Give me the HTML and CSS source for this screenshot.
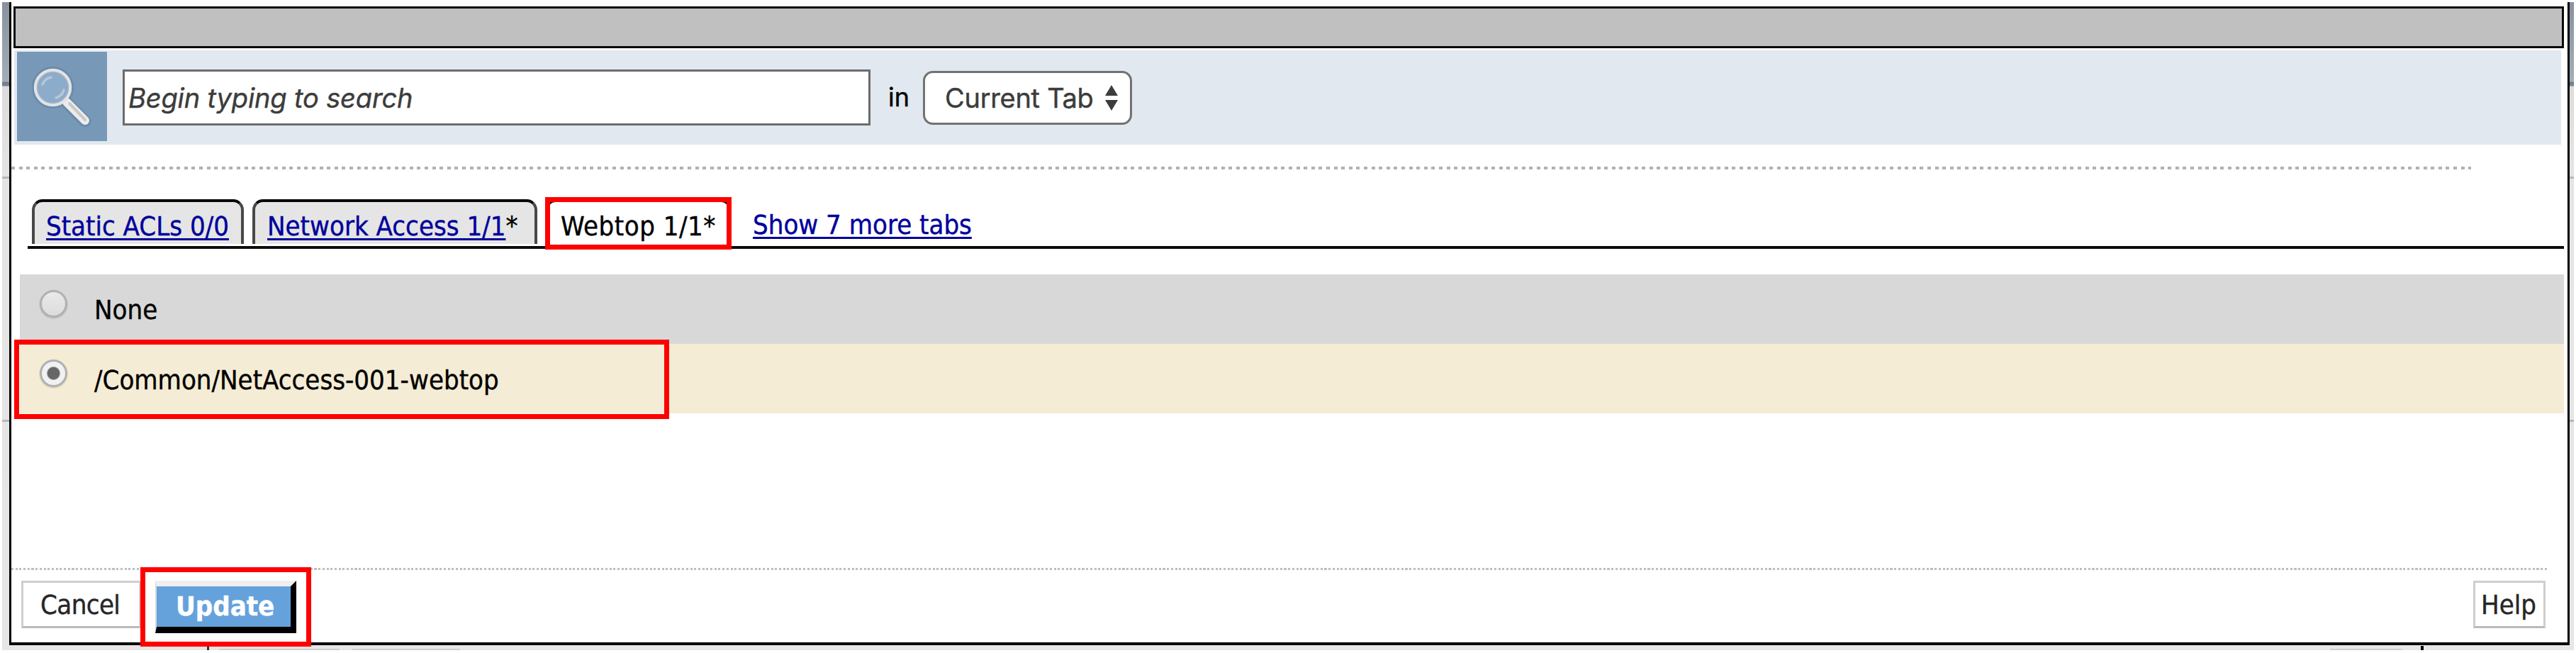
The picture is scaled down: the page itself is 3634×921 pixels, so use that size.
FILE: index.html
```html
<!DOCTYPE html>
<html lang="en">
<head>
<meta charset="utf-8">
<title>Webtop assignment</title>
<link rel="stylesheet" href="styles.css">
</head>
<body>
<div class="backdrop">
  <main class="dialog">
    <div class="title-bar"></div>
    <section class="search">
      <div class="search-icon">
        <svg viewBox="0 0 127 127" width="127" height="127" fill="none" stroke-linecap="round">
          <path d="M70 72 L96 98" stroke="#5f7f9f" stroke-width="17" opacity=".55"/>
          <circle cx="50.500" cy="50.500" r="25" stroke="#5f7f9f" stroke-width="9" opacity=".55"/>
          <path d="M70 71 L96 97" stroke="#ececec" stroke-width="12"/>
          <path d="M74 73 L96 96" stroke="#c9c9c9" stroke-width="4"/>
          <circle cx="50.500" cy="50.500" r="24.500" fill="#8dabcb" stroke="#e0e4e8" stroke-width="4.500"/>
          <circle cx="50.500" cy="50.500" r="22" stroke="#a9b5c2" stroke-width="1.500"/>
          <path d="M36 46 Q39 38 48 36" stroke="#b4c8dc" stroke-width="3.500"/>
          <path d="M55 65 Q64 62 66 54" stroke="#b4c8dc" stroke-width="3.500"/>
        </svg>
      </div>
      <div class="search-input">Begin typing to search</div>
      <span class="search-in">in</span>
      <div class="select"><span>Current Tab</span>
        <svg width="18" height="36" viewBox="0 0 18 36"><path d="M9 0 L18 15 H0 Z M0 21 H18 L9 36 Z" fill="#3c3c3c"/></svg>
      </div>
    </section>
    <div class="dots dots-top"></div>
    <nav class="tabs">
      <div class="tab tab-acl"><a>Static ACLs 0/0</a></div>
      <div class="tab tab-network"><a>Network Access 1/1</a>*</div>
      <div class="tab tab-webtop">Webtop 1/1*<i class="mark mark-tab"></i></div>
      <a class="more">Show 7 more tabs</a>
    </nav>
    <section class="options">
      <div class="option"><i class="radio"></i><span>None</span></div>
      <div class="option selected"><i class="radio"></i><span>/Common/NetAccess-001-webtop</span><i class="mark mark-option"></i></div>
    </section>
    <div class="dots dots-bottom"></div>
    <footer class="actions">
      <div class="button cancel">Cancel</div>
      <div class="update">Update<i class="mark mark-update"></i></div>
      <div class="button help">Help</div>
    </footer>
  </main>
  <div class="behind"><i class="b1"></i><i class="b2"></i><i class="b3"></i><i class="b4"></i><i class="b5"></i></div>
</div>
</body>
</html>
```
FILE: styles.css
```css
* { box-sizing: border-box; }
body {
  margin: 0;
  padding: 3px 3px 4px;
  height: 921px;
  overflow: hidden;
  background: #fff;
  color: #000;
  font: 38px/44px "DejaVu Sans Condensed", "DejaVu Sans", sans-serif;
  -webkit-text-stroke: .4px currentColor;
}
.backdrop {
  height: 914px;
  background:
    linear-gradient(#b8b8b8, #b8b8b8) 0 246px / 100% 3px no-repeat,
    linear-gradient(#b8b8b8, #b8b8b8) 0 589px / 100% 3px no-repeat,
    linear-gradient(#87929d 0, #a3adb9 112px, #6f7b87 113px, #7b8691 118px, #dcdcdc 119px, #e4e4e4 246px, #e6e6e6 100%);
}
.dialog {
  display: flex;
  flex-direction: column;
  height: 907px;
  margin: 0 6px 0 10px;
  border: solid #000;
  border-width: 0 3px 4px;
  background: #fff;
}
.title-bar {
  height: 59px;
  margin: 6px 5px 0 3px;
  border: 3px solid #0a0a0a;
  background: #c0c0c0;
}
.search {
  display: flex;
  height: 133px;
  margin: 3px 9px 0 4px;
  background: #e1e8ef;
  font-family: Inter, sans-serif;
}
.search-icon {
  width: 127px;
  height: 126px;
  margin: 2px 0 0 4px;
  background: #7898b8;
}
.search-icon svg { display: block; }
.search-input {
  width: 1055px;
  height: 79px;
  margin: 27px 0 0 22px;
  padding-left: 5px;
  border: 3px solid #6c6c6c;
  background: #fff;
  color: #3c3c3c;
  font-style: italic;
  line-height: 74px;
  letter-spacing: -.15px;
}
.search-in {
  margin: 27px 0 0 25px;
  width: 49px;
  line-height: 78px;
  font-size: 36px;
  white-space: nowrap;
}
.select {
  display: flex;
  align-items: center;
  gap: 14px;
  width: 295px;
  height: 76px;
  margin-top: 29px;
  padding-left: 28px;
  border: 3px solid #727272;
  border-radius: 14px;
  background: #fff;
  color: #3c3c3c;
}
.select span { width: 212px; letter-spacing: -.3px; white-space: nowrap; }
.dots { flex: none; }
.dots-top {
  width: 3470px;
  height: 4px;
  margin-top: 31px;
  background: repeating-linear-gradient(90deg, #b2b2b2 0 5px, #fff 5px 10.6px);
}
.tabs {
  display: flex;
  height: 70px;
  margin: 42px 5px 0 23px;
  padding-left: 6px;
  border-bottom: 4px solid #0c0c0c;
  white-space: nowrap;
}
.tab {
  position: relative;
  height: 63px;
  border: 4px solid #484848;
  border-top-color: #080808;
  border-bottom: 0;
  border-radius: 15px 15px 0 0;
  background: #e5e5e5;
  line-height: 69px;
}
.tab a, .more {
  color: #00009c;
  text-decoration: underline;
  text-decoration-thickness: 3px;
  text-underline-offset: 4px;
}
.tab-acl { width: 299px; padding-left: 16px; }
.tab-network { width: 402px; margin-left: 12px; padding-left: 17px; }
.tab-webtop { width: 263px; height: 66px; margin-left: 11px; padding-left: 18px; background: #fff; letter-spacing: .5px; }
.more { margin-left: 30px; line-height: 72px; }
.options { margin: 36px 5px 0 12px; }
.option {
  position: relative;
  display: flex;
  height: 98px;
  padding-left: 28px;
  background: #d8d8d8;
  line-height: 101px;
}
.option.selected { background: #f5ecd5; line-height: 102px; }
.radio {
  width: 39px;
  height: 39px;
  margin: 22px 38px 0 0;
  border: 3px solid #b0b0b0;
  border-radius: 50%;
  background: linear-gradient(#e9e9e9, #dcdcdc);
  box-shadow: 0 1px 2px rgba(0, 0, 0, .2);
}
.selected .radio { background: radial-gradient(circle, #666 0 8px, #f1f1f1 10px); }
.dots-bottom {
  width: 3580px;
  height: 3px;
  margin-top: 218px;
  background: repeating-linear-gradient(90deg, #bebebe 0 3px, #fff 3px 5.7px);
}
.actions { display: flex; margin: 15px 30px 0 14px; }
.button {
  height: 67px;
  border: 3px solid #cfcfcf;
  border-bottom-color: #bbb;
  color: #262626;
  line-height: 62px;
}
.cancel { width: 169px; padding-left: 24px; letter-spacing: -.6px; }
.update {
  position: relative;
  width: 199px;
  height: 74px;
  margin-left: 20px;
  padding-left: 27px;
  border: solid #000;
  border-width: 8px 8px 9px 2px;
  border-top-color: #efefef;
  border-left-color: #d8d8d8;
  background: #65a2dc;
  color: #fff;
  font-weight: bold;
  line-height: 57px;
}
.help { width: 102px; margin: 0 1px 0 auto; padding-left: 8px; }
.mark {
  position: absolute;
  border: 7px solid #f00;
}
.mark-tab { left: -4px; top: -7px; width: 263px; height: 74px; }
.mark-option { left: -8px; top: -6px; width: 924px; height: 112px; }
.mark-update { left: -23px; top: -27px; width: 241px; height: 112px; }
.behind { display: flex; height: 7px; padding-top: 1px; }
.behind i { height: 2px; margin-top: 4px; background: #cfcfcf; }
.behind .b1, .behind .b5 { height: 6px; margin-top: 0; width: 3px; background: #333; }
.behind .b1 { margin-left: 289px; }
.behind .b2 { width: 170px; margin-left: 14px; }
.behind .b3 { width: 152px; margin-left: 18px; }
.behind .b4 { width: 102px; margin-left: 2638px; }
.behind .b5 { width: 4px; margin-left: 26px; background: #000; }
```
